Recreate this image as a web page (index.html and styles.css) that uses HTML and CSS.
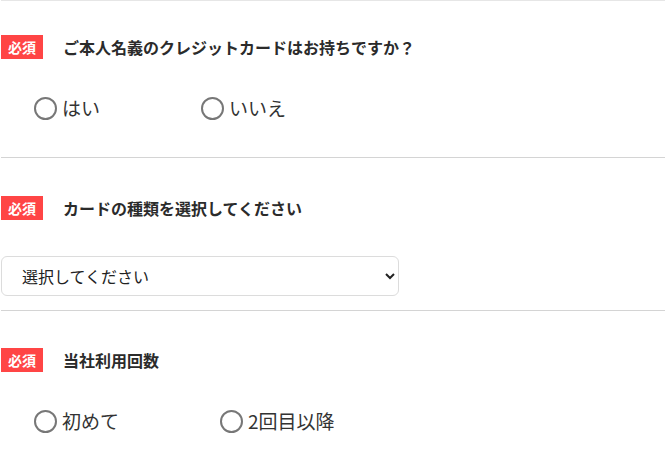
FILE: index.html
```html
<!DOCTYPE html>
<html lang="ja">
<head>
<meta charset="utf-8">
<link rel="stylesheet" href="styles.css">
</head>
<body>
<form class="form">
  <section class="field field-first">
    <div class="field-head">
      <span class="badge">必須</span>
      <span class="question">ご本人名義のクレジットカードはお持ちですか？</span>
    </div>
    <div class="choices">
      <label class="choice"><input type="radio" name="own"><span>はい</span></label>
      <label class="choice"><input type="radio" name="own"><span>いいえ</span></label>
    </div>
  </section>
  <section class="field field-select">
    <div class="field-head">
      <span class="badge">必須</span>
      <span class="question">カードの種類を選択してください</span>
    </div>
    <div class="select-wrap">
      <select class="select">
        <option>選択してください</option>
      </select>
    </div>
  </section>
  <section class="field field-last">
    <div class="field-head">
      <span class="badge">必須</span>
      <span class="question">当社利用回数</span>
    </div>
    <div class="choices">
      <label class="choice"><input type="radio" name="count"><span>初めて</span></label>
      <label class="choice"><input type="radio" name="count"><span>2回目以降</span></label>
    </div>
  </section>
</form>
</body>
</html>
```

FILE: styles.css
```css
html, body {
  margin: 0;
  padding: 0;
  background: #fff;
}
body {
  font-family: "Noto Sans CJK JP", "Noto Sans", sans-serif;
  color: #333;
}
.form {
  margin: 0 1px;
  border-top: 1px solid #e6e6e6;
}
.field {
  padding: 37px 0 36px;
  border-bottom: 1px solid #d4d4d4;
}
.field-first {
  padding-top: 34px;
}
.field-select {
  padding-top: 38px;
  padding-bottom: 14px;
}
.field-last {
  border-bottom: none;
}
.field-head {
  display: flex;
  align-items: center;
  gap: 20px;
  height: 24px;
}
.badge {
  display: flex;
  align-items: center;
  justify-content: center;
  width: 42px;
  height: 24px;
  background: #ff4545;
  color: #fff;
  font-size: 14px;
  font-weight: 700;
  line-height: 1;
}
.question {
  font-size: 16px;
  font-weight: 700;
  color: #2b2b2b;
  line-height: 1;
}
.choices {
  display: flex;
  align-items: center;
  gap: 101px;
  margin-top: 36px;
  padding-left: 33px;
  height: 26px;
}
.choice {
  display: flex;
  align-items: center;
  gap: 5px;
  font-size: 19px;
  color: #333;
  line-height: 26px;
}
.choice input {
  appearance: none;
  -webkit-appearance: none;
  margin: 0;
  width: 23px;
  height: 23px;
  border: 2px solid #777;
  border-radius: 50%;
  background: #fff;
  box-sizing: border-box;
}
.select-wrap {
  margin-top: 36px;
  width: 398px;
}
.select {
  width: 398px;
  height: 40px;
  border: 1px solid #dcdcdc;
  border-radius: 6px;
  background: #fff;
  padding: 0 6px 0 16px;
  font-family: "Noto Sans CJK JP", sans-serif;
  font-size: 16px;
  color: #222;
  box-sizing: border-box;
}
```
